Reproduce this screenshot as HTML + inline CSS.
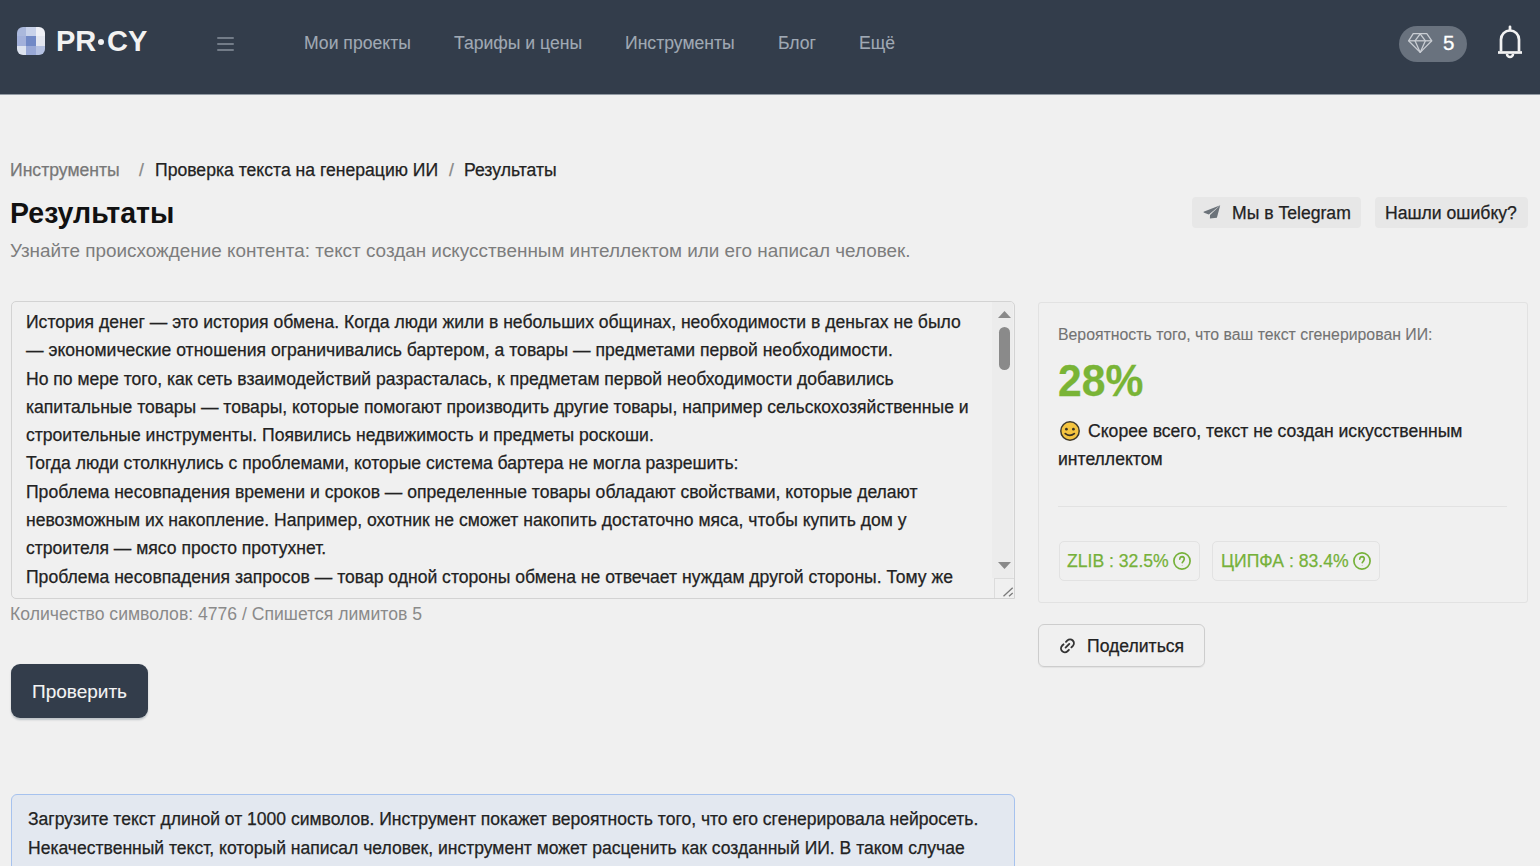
<!DOCTYPE html>
<html><head><meta charset="utf-8">
<style>
*{box-sizing:border-box}
html,body{margin:0;padding:0}
body{-webkit-text-stroke:0.25px currentColor;width:1540px;height:866px;overflow:hidden;background:#f0f0f0;position:relative;font-family:"Liberation Sans",sans-serif;color:#222}
.a{position:absolute;white-space:nowrap}
#hdr{position:absolute;left:0;top:0;width:1540px;height:94px;background:#333d4b;box-shadow:0 1px 0 #929aa3}
.nav{position:absolute;top:30px;font-size:17.6px;line-height:26px;color:#a0a9b4;-webkit-text-stroke:0.1px #a0a9b4}
.logo{position:absolute;left:17px;top:27px;width:28px;height:28px;border-radius:6px;overflow:hidden;display:grid;grid-template-columns:repeat(3,1fr);grid-template-rows:repeat(3,1fr)}
.bc{font-size:17.6px;line-height:22px;margin-top:1px}
.btn-g{position:absolute;top:197px;height:31px;background:#e7e7e7;border-radius:4px}
.ta{position:absolute;left:11px;top:301px;width:1004px;height:298px;border:1px solid #d3d3d3;border-radius:5px 5px 0 5px;overflow:hidden}
.tl{position:absolute;left:14px;font-size:17.57px;line-height:28.3px;color:#222;white-space:nowrap}
.card{position:absolute;left:1038px;top:302px;width:490px;height:301px;border:1px solid #e2e2e2;border-radius:3px}
.badge{position:absolute;top:541px;height:40px;border:1px solid #e2e2e2;border-radius:5px;color:#76b13a;font-size:17.6px}
</style></head><body>
<div id="hdr">
  <div class="logo">
    <div style="background:#aab8dc"></div><div style="background:#c8d2ea"></div><div style="background:#eef0f6"></div>
    <div style="background:#a2b0da"></div><div style="background:#7189c6"></div><div style="background:#e2e6f0"></div>
    <div style="background:#dde3ef"></div><div style="background:#98a8d6"></div><div style="background:#b4c1e2"></div>
  </div>
  <div class="a" style="left:56px;top:24px;font-size:29px;line-height:34px;font-weight:700;color:#f2f2f2;-webkit-text-stroke:0">PR</div><div class="a" style="left:98px;top:39px;width:6px;height:6px;border-radius:50%;background:#f2f2f2"></div><div class="a" style="left:107px;top:24px;font-size:29px;line-height:34px;font-weight:700;color:#f2f2f2;-webkit-text-stroke:0">CY</div>
  <div class="a" style="left:216.5px;top:37px;width:17px;height:2px;border-radius:1px;background:#737c88;box-shadow:0 6px 0 #737c88,0 12px 0 #737c88"></div>
  <div class="nav a" style="left:304px">Мои проекты</div>
  <div class="nav a" style="left:454px">Тарифы и цены</div>
  <div class="nav a" style="left:625px">Инструменты</div>
  <div class="nav a" style="left:778px">Блог</div>
  <div class="nav a" style="left:859px">Ещё</div>
  <div class="a" style="left:1399px;top:26px;width:68px;height:36px;border-radius:18px;background:#69727e"></div>
  <svg class="a" style="left:1406px;top:31px" width="28" height="24" viewBox="0 0 28 24" fill="none" stroke="#c9cdd3" stroke-width="1.3" stroke-linejoin="round">
    <path d="M7.2 2.6H20.8L25.8 9.8 14.2 21.4 2.6 9.8z"/><path d="M2.6 9.8H25.8"/><path d="M14.2 2.8L9 9.8 14.2 21.4 19.4 9.8z"/>
  </svg>
  <div class="a" style="left:1443px;top:30px;font-size:20.5px;line-height:26px;color:#fff;-webkit-text-stroke:0.3px #fff">5</div>
  <svg class="a" style="left:1496px;top:24px" width="28" height="36" viewBox="0 0 28 36" fill="none" stroke="#f2f2f2" stroke-width="2.7">
    <path d="M14 2.8V5.5" stroke-linecap="round"/><path d="M5 27.5V15.5A9 9 0 0 1 23 15.5V27.5"/><path d="M2 28.5H26"/><path d="M11 30A3 3 0 0 0 17 30" stroke-width="2.5"/>
  </svg>
</div>

<div class="a bc" style="left:10px;top:158px;color:#777">Инструменты</div>
<div class="a bc" style="left:139px;top:158px;color:#888">/</div>
<div class="a bc" style="left:155px;top:158px;color:#222">Проверка текста на генерацию ИИ</div>
<div class="a bc" style="left:449px;top:158px;color:#888">/</div>
<div class="a bc" style="left:464px;top:158px;color:#222">Результаты</div>

<div class="a" style="left:10px;top:197px;font-size:28.5px;line-height:32px;font-weight:700;color:#111;-webkit-text-stroke:0;transform:scaleY(1.04);transform-origin:0 26px">Результаты</div>
<div class="a" style="left:10px;top:239px;font-size:18.9px;line-height:24px;color:#7d7d7d;-webkit-text-stroke:0">Узнайте происхождение контента: текст создан искусственным интеллектом или его написал человек.</div>

<div class="btn-g" style="left:1192px;width:169px">
  <svg class="a" style="left:11px;top:7px" width="18" height="16" viewBox="0 0 18 16" fill="#6c737a"><path d="M0.6 7.8L17.2 1.3 5.8 10.4 Q3 9.2 0.6 8.4z"/><path d="M7 10.9L17.2 1.3 13.9 13.8 6.9 14.5z"/></svg>
  <div class="a" style="left:40px;top:5px;font-size:17.6px;line-height:22px;color:#222">Мы в Telegram</div>
</div>
<div class="btn-g" style="left:1375px;width:153px">
  <div class="a" style="left:10px;top:5px;font-size:17.6px;line-height:22px;color:#222">Нашли ошибку?</div>
</div>

<div class="ta">
  <div class="tl" style="top:6px">История денег — это история обмена. Когда люди жили в небольших общинах, необходимости в деньгах не было<br>— экономические отношения ограничивались бартером, а товары — предметами первой необходимости.<br>Но по мере того, как сеть взаимодействий разрасталась, к предметам первой необходимости добавились<br>капитальные товары — товары, которые помогают производить другие товары, например сельскохозяйственные и<br>строительные инструменты. Появились недвижимость и предметы роскоши.<br>Тогда люди столкнулись с проблемами, которые система бартера не могла разрешить:<br>Проблема несовпадения времени и сроков — определенные товары обладают свойствами, которые делают<br>невозможным их накопление. Например, охотник не сможет накопить достаточно мяса, чтобы купить дом у<br>строителя — мясо просто протухнет.<br>Проблема несовпадения запросов — товар одной стороны обмена не отвечает нуждам другой стороны. Тому же<br>мастеру</div>
  <div class="a" style="left:980px;top:0;width:21px;height:276px;background:#ececec"></div>
  <svg class="a" style="left:986px;top:9px" width="13" height="7"><path d="M0 7L6.5 0 13 7z" fill="#8a8a8a"/></svg>
  <div class="a" style="left:987px;top:25px;width:11px;height:43px;border-radius:6px;background:#8a8a8a"></div>
  <svg class="a" style="left:986px;top:260px" width="13" height="7"><path d="M0 0L6.5 7 13 0z" fill="#8a8a8a"/></svg>
  <div class="a" style="left:982px;top:276px;width:21px;height:21px;border-left:1px solid #dcdcdc;border-top:1px solid #dcdcdc"></div>
  <svg class="a" style="left:991px;top:283px" width="12" height="12" stroke="#7a7a7a" stroke-width="1.3"><path d="M0.5 11.3L9.7 2.7M6 11.3L9.7 8.1"/></svg>
</div>

<div class="a" style="left:10px;top:603px;font-size:17.6px;line-height:22px;color:#8a8a8a;-webkit-text-stroke:0">Количество символов: 4776 / Спишется лимитов 5</div>

<div class="a" style="left:11px;top:664px;width:137px;height:54px;border-radius:9px;background:#333d4b;box-shadow:0 1.5px 2px rgba(20,40,60,0.22)"></div>
<div class="a" style="left:32px;top:680px;font-size:19px;line-height:24px;color:#f4f4f4;-webkit-text-stroke:0.1px #f4f4f4">Проверить</div>

<div class="card"></div>
<div class="a" style="left:1058px;top:325px;font-size:15.84px;line-height:20px;color:#737373;-webkit-text-stroke:0.1px #737373">Вероятность того, что ваш текст сгенерирован ИИ:</div>
<div class="a" style="left:1058px;top:358px;font-size:42.6px;line-height:46px;font-weight:700;color:#79b436;transform:scaleY(1.05);transform-origin:0 38px">28%</div>
<svg class="a" style="left:1059px;top:420px" width="22" height="22" viewBox="0 0 22 22"><circle cx="11" cy="11" r="9.2" fill="#f4c440" stroke="#3f3a2c" stroke-width="1.5"/><circle cx="7.4" cy="9.2" r="1.35" fill="#3a3222"/><circle cx="14.4" cy="9.2" r="1.35" fill="#3a3222"/><path d="M6.3 13.6Q10.9 17 15.3 13.6" fill="none" stroke="#3a3222" stroke-width="1.8" stroke-linecap="round"/></svg>
<div class="a" style="left:1088px;top:417px;font-size:17.6px;line-height:28px;color:#222">Скорее всего, текст не создан искусственным</div>
<div class="a" style="left:1058px;top:445px;font-size:17.6px;line-height:28px;color:#222">интеллектом</div>
<div class="a" style="left:1058px;top:506px;width:449px;height:1px;background:#e2e2e2"></div>

<div class="badge" style="left:1059px;width:141px">
  <div class="a" style="left:7px;top:8px;line-height:22px">ZLIB : 32.5%</div><svg class="a" style="left:112px;top:9px" width="20" height="20" viewBox="0 0 20 20" fill="none" stroke="#76b13a"><circle cx="10" cy="10" r="8.1" stroke-width="1.7"/><path d="M7.7 8.2Q7.9 5.6 10.2 5.6Q12.4 5.8 12.3 8Q12 9.8 10.2 11.7" stroke-width="1.6" stroke-linecap="round"/><circle cx="10.2" cy="14.5" r="0.6" fill="#b5d49a" stroke="none"/></svg>
</div>
<div class="badge" style="left:1212px;width:168px">
  <div class="a" style="left:8px;top:8px;line-height:22px">ЦИПФА : 83.4%</div><svg class="a" style="left:139px;top:9px" width="20" height="20" viewBox="0 0 20 20" fill="none" stroke="#76b13a"><circle cx="10" cy="10" r="8.1" stroke-width="1.7"/><path d="M7.7 8.2Q7.9 5.6 10.2 5.6Q12.4 5.8 12.3 8Q12 9.8 10.2 11.7" stroke-width="1.6" stroke-linecap="round"/><circle cx="10.2" cy="14.5" r="0.6" fill="#b5d49a" stroke="none"/></svg>
</div>

<div class="a" style="left:1038px;top:624px;width:167px;height:43px;border:1px solid #cdcdcd;border-radius:6px;box-shadow:0 1px 1px rgba(0,0,0,0.06)"></div>
<svg class="a" style="left:1059px;top:637px" width="18" height="18" viewBox="-1 -1 18 18" fill="none" stroke="#333" stroke-width="1.9" stroke-linecap="round"><path d="M6 3.8L7.43 2.38A3.85 3.85 0 0 1 12.87 7.82L11.4 9.3"/><path d="M8.9 11.8L7.47 13.22A3.85 3.85 0 0 1 2.03 7.78L3.5 6.3"/><path d="M5.6 9.6L9.3 5.9"/></svg><div class="a" style="left:1087px;top:635px;font-size:17.6px;line-height:22px;color:#222">Поделиться</div>

<div class="a" style="left:11px;top:794px;width:1004px;height:100px;border:1px solid #a6c2ee;border-radius:6px;background:#e3e8f0"></div>
<div class="a" style="left:28px;top:805px;font-size:17.55px;line-height:28.6px;color:#222">Загрузите текст длиной от 1000 символов. Инструмент покажет вероятность того, что его сгенерировала нейросеть.<br>Некачественный текст, который написал человек, инструмент может расценить как созданный ИИ. В таком случае</div>
</body></html>
